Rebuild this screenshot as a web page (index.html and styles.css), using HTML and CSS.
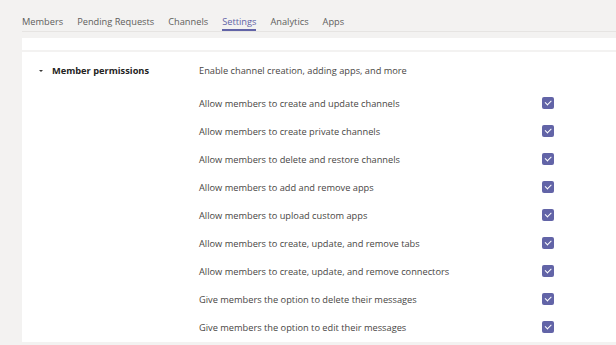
FILE: index.html
```html
<!DOCTYPE html>
<html lang="en">
<head>
  <meta charset="UTF-8">
  <meta name="viewport" content="width=device-width, initial-scale=1.0">
  <title>Team settings</title>
  <link rel="stylesheet" href="styles.css">
</head>
<body>
  <nav class="tabs">
    <a class="tab">Members</a>
    <a class="tab">Pending Requests</a>
    <a class="tab">Channels</a>
    <a class="tab active">Settings</a>
    <a class="tab">Analytics</a>
    <a class="tab">Apps</a>
  </nav>
  <div class="panel panel-prev"></div>
  <section class="panel">
    <div class="section-head">
      <div class="section-title"><span class="caret"></span>Member permissions</div>
      <div class="section-desc">Enable channel creation, adding apps, and more</div>
    </div>
    <ul class="options">
      <li><span>Allow members to create and update channels</span><span class="check"></span></li>
      <li><span>Allow members to create private channels</span><span class="check"></span></li>
      <li><span>Allow members to delete and restore channels</span><span class="check"></span></li>
      <li><span>Allow members to add and remove apps</span><span class="check"></span></li>
      <li><span>Allow members to upload custom apps</span><span class="check"></span></li>
      <li><span>Allow members to create, update, and remove tabs</span><span class="check"></span></li>
      <li><span>Allow members to create, update, and remove connectors</span><span class="check"></span></li>
      <li><span>Give members the option to delete their messages</span><span class="check"></span></li>
      <li><span>Give members the option to edit their messages</span><span class="check"></span></li>
    </ul>
  </section>
</body>
</html>
```
FILE: styles.css
```css
body {
  margin: 0;
  background-color: #f3f2f1;
  font-family: "Open Sans", "Noto Sans", sans-serif;
  font-size: 9.25px;
  color: #484644;
  overflow: hidden;
}
.tabs {
  display: flex;
  gap: 14px;
  margin-left: 22px;
  height: 31px;
  border-bottom: 1px solid #e6e4e2;
}
.tab {
  font-size: 9.25px;
  color: #605e5c;
  padding-top: 15px;
  height: 14px;
  border-bottom: 2px solid transparent;
}
.tab.active {
  color: #6264a7;
  border-bottom-color: #6264a7;
}
.panel {
  background: white;
  margin-left: 22px;
}
.panel-prev {
  margin-top: 6px;
  height: 12px;
}
.panel + .panel {
  margin-top: 2px;
  height: 290px;
}
.section-head {
  display: flex;
  padding-top: 11px;
  height: 26px;
}
.section-title {
  width: 177px;
  font-weight: bold;
  color: #252423;
  line-height: 15px;
  position: relative;
  padding-left: 30px;
  box-sizing: border-box;
}
.caret {
  position: absolute;
  left: 17px;
  top: 7px;
  border-left: 2.5px solid transparent;
  border-right: 2.5px solid transparent;
  border-top: 2.5px solid #3b3a39;
}
.section-desc {
  line-height: 15px;
}
.options {
  list-style: none;
  margin: 0;
  padding: 0 0 0 177px;
}
.options li {
  display: flex;
  align-items: center;
  justify-content: space-between;
  width: 355px;
  height: 28px;
}
.check {
  width: 12px;
  height: 12px;
  border-radius: 2px;
  background: #6264a7;
  position: relative;
}
.check::after {
  content: "";
  position: absolute;
  left: 3px;
  top: 3px;
  width: 5px;
  height: 2.5px;
  border-left: 1px solid white;
  border-bottom: 1px solid white;
  transform: rotate(-45deg);
}
```
